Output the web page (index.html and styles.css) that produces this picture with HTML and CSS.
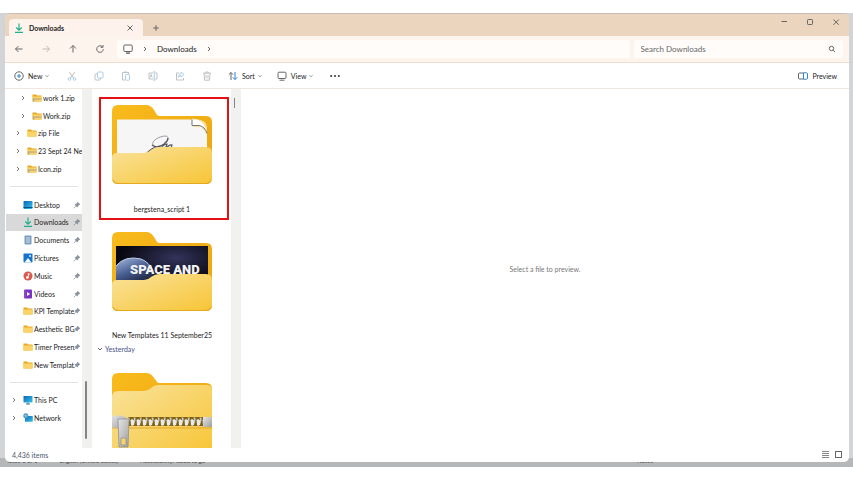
FILE: index.html
```html
<!DOCTYPE html>
<html lang="en">
<head>
  <meta charset="UTF-8">
  <meta name="viewport" content="width=device-width, initial-scale=1.0">
  <title>Downloads</title>
  <link rel="stylesheet" href="styles.css">
</head>
<body>

  <!-- Shared icons -->
  <svg class="sprite" aria-hidden="true">
    <defs>
      <linearGradient id="front" x1="0" y1="0" x2="1" y2="1">
        <stop offset="0" stop-color="#f9e29a"/>
        <stop offset="1" stop-color="#f7c537"/>
      </linearGradient>
      <linearGradient id="back" x1="0" y1="0" x2="1" y2="1">
        <stop offset="0" stop-color="#f9bb1c"/>
        <stop offset="1" stop-color="#e9a312"/>
      </linearGradient>
      <linearGradient id="screen" x1="0" y1="0" x2="1" y2="1">
        <stop offset="0" stop-color="#0e63b8"/>
        <stop offset="1" stop-color="#35c6e8"/>
      </linearGradient>
      <radialGradient id="space" cx="0.65" cy="0.3" r="0.6">
        <stop offset="0" stop-color="#33335c"/>
        <stop offset="1" stop-color="#07080f"/>
      </radialGradient>
      <linearGradient id="planet" x1="0" y1="0" x2="0.6" y2="1">
        <stop offset="0" stop-color="#a9bbe0"/>
        <stop offset="0.5" stop-color="#4a5f92"/>
        <stop offset="1" stop-color="#141b33"/>
      </linearGradient>
      <linearGradient id="metal" x1="0" y1="0" x2="1" y2="1">
        <stop offset="0" stop-color="#e6e6e6"/>
        <stop offset="1" stop-color="#9d9d9d"/>
      </linearGradient>
      <pattern id="teeth" width="6" height="9" patternUnits="userSpaceOnUse" y="44">
        <rect width="6" height="9" fill="#80620f"/>
        <path d="M0.500 3 2 2l3 2-1 4-2 1-1-1z" fill="#e9e9e9"/>
        <path d="M3.500 0.500h2v3l-1 2z" fill="#c9c9c9"/>
      </pattern>
    </defs>
    <symbol id="chevron" viewBox="0 0 8 8"><path d="M3 2 5 4 3 6"/></symbol>
    <symbol id="down" viewBox="0 0 8 8"><path d="M2 3l2 2 2-2"/></symbol>
    <symbol id="download" viewBox="0 0 10 10"><path d="M5 0.500V7M2.200 4.500 5 7.200l2.800-2.700M1 9.300h8" fill="none" stroke="#1fb089" stroke-width="1.200"/></symbol>
    <symbol id="folder" viewBox="0 0 10 10"><path d="M0.500 1.500h3.500l1 1h4.500v6h-9z" fill="#e9a820"/><path d="M0.500 3.500h9v5h-9z" fill="#fbd469"/></symbol>
    <symbol id="zip" viewBox="0 0 10 10"><path d="M0.500 1.500h3.500l1 1h4.500v6h-9z" fill="#e9a820"/><path d="M0.500 3.500h9v5h-9z" fill="#fbd469"/><path d="M1 6h8.500" stroke="#8c8c8c" stroke-width="1.200" stroke-dasharray="1.200 0.400"/><path d="M1.700 6v2.500" stroke="#a5a5a5" stroke-width="1.200"/></symbol>
    <symbol id="pin" viewBox="0 0 8 8"><path d="M4.500 0.700 7.300 3.500 5.800 4.200 4.300 6.500 1.500 3.700 3.800 2.200z" fill="#8a939d"/><path d="M2.700 5.300 0.800 7.200" stroke="#8a939d" stroke-width="0.800"/></symbol>
    <symbol id="monitor" viewBox="0 0 10 10"><rect x="0.800" y="1" width="8.400" height="6.500" rx="1"/><path d="M3 9.300h4M4 7.500v1.800M6 7.500v1.800"/></symbol>
    <symbol id="pc" viewBox="0 0 10 10"><rect x="0.500" y="1" width="9" height="6.500" rx="0.600" fill="url(#screen)"/><path d="M3 9h4M5 7.500V9" stroke="#42708f"/></symbol>
  </svg>

  <div class="desktop">
    <div class="window">

      <!-- Tabs and window buttons -->
      <div class="tab-bar">
        <div class="tab">
          <svg class="icon"><use href="#download"/></svg>
          <span class="tab-title">Downloads</span>
          <button class="icon-btn" aria-label="Close tab"><svg class="icon line" viewBox="0 0 10 10"><path d="M2.500 2.500l5 5M7.500 2.500l-5 5"/></svg></button>
        </div>
        <button class="icon-btn new-tab" aria-label="New tab"><svg class="icon line" viewBox="0 0 10 10"><path d="M5 2.200v5.600M2.200 5h5.600"/></svg></button>
        <div class="window-buttons">
          <button class="icon-btn" aria-label="Minimize"><svg class="icon line" viewBox="0 0 10 10"><path d="M2.500 4.500h5.500"/></svg></button>
          <button class="icon-btn" aria-label="Maximize"><svg class="icon line" viewBox="0 0 10 10"><rect x="2.500" y="2.500" width="5" height="5" rx="0.800"/></svg></button>
          <button class="icon-btn" aria-label="Close"><svg class="icon line" viewBox="0 0 10 10"><path d="M2.500 2.500l5.300 5.300M7.800 2.500L2.500 7.800"/></svg></button>
        </div>
      </div>

      <!-- Address bar -->
      <div class="nav-bar">
        <div class="nav-buttons">
          <button class="icon-btn" aria-label="Back"><svg class="icon line" viewBox="0 0 10 10"><path d="M8.500 5H1.500M4.500 2l-3 3 3 3"/></svg></button>
          <button class="icon-btn" aria-label="Forward" disabled><svg class="icon line" viewBox="0 0 10 10"><path d="M1.500 5h7M5.500 2l3 3-3 3"/></svg></button>
          <button class="icon-btn" aria-label="Up"><svg class="icon line" viewBox="0 0 10 10"><path d="M5 8.500V1.500M2 4.500l3-3 3 3"/></svg></button>
          <button class="icon-btn" aria-label="Refresh"><svg class="icon line" viewBox="0 0 10 10"><path d="M8.300 5.200A3.300 3.300 0 1 1 7.300 2.700M8 1v2.300H5.700"/></svg></button>
        </div>
        <nav class="breadcrumb" aria-label="Path">
          <svg class="icon line"><use href="#monitor"/></svg>
          <svg class="small-icon line"><use href="#chevron"/></svg>
          <a href="#">Downloads</a>
          <svg class="small-icon line"><use href="#chevron"/></svg>
        </nav>
        <label class="search">
          <input type="search" placeholder="Search Downloads" aria-label="Search Downloads">
          <svg class="small-icon line" viewBox="0 0 8 8"><circle cx="3.500" cy="3.500" r="2.200"/><path d="M5.200 5.200 7 7"/></svg>
        </label>
      </div>

      <!-- Command bar -->
      <div class="toolbar">
        <button class="tool-btn new-btn"><svg class="icon line" viewBox="0 0 10 10"><circle cx="5" cy="5" r="4.200"/><path class="blue" d="M5 3v4M3 5h4"/></svg>New<svg class="down line" viewBox="0 0 8 8"><use href="#down"/></svg></button>
        <div class="edit-buttons">
          <button class="icon-btn" aria-label="Cut" disabled><svg class="icon line" viewBox="0 0 10 10"><path d="M2.200 0.800 6.500 7M7.800 0.800 3.500 7"/><circle class="blue" cx="2.500" cy="8" r="1.300"/><circle class="blue" cx="7.500" cy="8" r="1.300"/></svg></button>
          <button class="icon-btn" aria-label="Copy" disabled><svg class="icon line" viewBox="0 0 10 10"><rect class="blue" x="3.500" y="1" width="5.500" height="6" rx="1"/><path d="M3.500 3H2a1 1 0 0 0-1 1v4a1 1 0 0 0 1 1h3.500a1 1 0 0 0 1-1V7"/></svg></button>
          <button class="icon-btn" aria-label="Paste" disabled><svg class="icon line" viewBox="0 0 10 10"><path d="M4 9H1.500V1.500h6V3M3 1h3"/><rect class="blue" x="4.500" y="3.500" width="4" height="5.700" rx="0.800"/></svg></button>
          <button class="icon-btn" aria-label="Rename" disabled><svg class="icon line" viewBox="0 0 10 10"><path d="M5 2H1v6h4M2.200 6.500l1-3 1 3M7.300 2H9v6H7.300"/><path class="blue" d="M6.300 0.800v8.400M5.300 0.800h2M5.300 9.200h2"/></svg></button>
          <button class="icon-btn" aria-label="Share" disabled><svg class="icon line" viewBox="0 0 10 10"><path d="M4 2H1.500v7h7V7"/><path class="blue" d="M6 1l3 2.500L6 6V4.500Q4 4.500 3.500 6.500 3.500 2.800 6 2.500z"/></svg></button>
          <button class="icon-btn" aria-label="Delete" disabled><svg class="icon line" viewBox="0 0 10 10"><path d="M1 2.200h8M3.700 2V1h2.600v1M2 2.200 2.500 9.200h5L8 2.200M4 4v3.500M6 4v3.500"/></svg></button>
        </div>
        <button class="tool-btn"><svg class="icon line" viewBox="0 0 10 10"><path d="M3 9V1.500M0.800 3.700 3 1.500l2.200 2.200"/><path class="blue" d="M7 1v7.500M4.800 6.300 7 8.500l2.200-2.200"/></svg>Sort<svg class="down line" viewBox="0 0 8 8"><use href="#down"/></svg></button>
        <button class="tool-btn view-btn"><svg class="icon line" viewBox="0 0 10 10"><rect x="1" y="1.200" width="8" height="6.300" rx="1"/><path d="M2.500 9.200h5"/></svg>View<svg class="down line" viewBox="0 0 8 8"><use href="#down"/></svg></button>
        <button class="icon-btn more-btn" aria-label="More"><svg class="icon" viewBox="0 0 10 10"><circle cx="1.200" cy="5" r="1"/><circle cx="5" cy="5" r="1"/><circle cx="8.800" cy="5" r="1"/></svg></button>
        <button class="tool-btn preview-btn"><svg class="icon line" viewBox="0 0 10 10"><path d="M5.500 2H1.500a1 1 0 0 0-1 1v4a1 1 0 0 0 1 1h4"/><path class="blue" d="M5.500 1.800h3a1 1 0 0 1 1 1v4.400a1 1 0 0 1-1 1h-3z"/></svg>Preview</button>
      </div>

      <div class="content">
        <!-- Folder tree -->
        <nav class="sidebar" aria-label="Folders">
          <a class="row nested" href="#"><svg class="small-icon line"><use href="#chevron"/></svg><svg class="icon"><use href="#zip"/></svg><span>work 1.zip</span></a>
          <a class="row nested" href="#"><svg class="small-icon line"><use href="#chevron"/></svg><svg class="icon"><use href="#zip"/></svg><span>Work.zip</span></a>
          <a class="row" href="#"><svg class="small-icon line"><use href="#chevron"/></svg><svg class="icon"><use href="#folder"/></svg><span>zip File</span></a>
          <a class="row" href="#"><svg class="small-icon line"><use href="#chevron"/></svg><svg class="icon"><use href="#zip"/></svg><span>23 Sept 24 New</span></a>
          <a class="row" href="#"><svg class="small-icon line"><use href="#chevron"/></svg><svg class="icon"><use href="#zip"/></svg><span>Icon.zip</span></a>
          <hr>
          <a class="row pinned" href="#"><svg class="icon" viewBox="0 0 10 10"><rect x="0.500" y="1" width="9" height="8" rx="0.800" fill="url(#screen)"/><path d="M0.500 7.500h9" stroke="#0b4f8a"/></svg><span>Desktop</span><svg class="small-icon"><use href="#pin"/></svg></a>
          <a class="row pinned selected" href="#"><svg class="icon"><use href="#download"/></svg><span>Downloads</span><svg class="small-icon"><use href="#pin"/></svg></a>
          <a class="row pinned" href="#"><svg class="icon" viewBox="0 0 10 10"><rect x="1.500" y="0.500" width="7" height="9" rx="0.800" fill="#7b9dbf"/><path d="M3 3h4M3 5h4M3 7h4" stroke="#e9f2fa" stroke-width="0.800"/></svg><span>Documents</span><svg class="small-icon"><use href="#pin"/></svg></a>
          <a class="row pinned" href="#"><svg class="icon" viewBox="0 0 10 10"><rect x="0.500" y="0.500" width="9" height="9" rx="0.800" fill="#1474cf"/><path d="M1.500 9.500 5 5l3.500 4.500z" fill="#fff"/><circle cx="7" cy="3" r="0.900" fill="#fff"/></svg><span>Pictures</span><svg class="small-icon"><use href="#pin"/></svg></a>
          <a class="row pinned" href="#"><svg class="icon" viewBox="0 0 10 10"><circle cx="5" cy="5" r="4.500" fill="#d9584f"/><circle cx="4.300" cy="6.500" r="1.300" fill="#fff"/><path d="M5.300 6.500V2.500L7 3.500" fill="none" stroke="#fff" stroke-width="0.900"/></svg><span>Music</span><svg class="small-icon"><use href="#pin"/></svg></a>
          <a class="row pinned" href="#"><svg class="icon" viewBox="0 0 10 10"><rect x="1" y="0.500" width="8" height="9" rx="0.800" fill="#7a32c4"/><path d="M4 3 7.200 5 4 7z" fill="#fff"/><path d="M2 1.500v7.500" stroke="#c9a5ee" stroke-width="0.800" stroke-dasharray="1 1"/></svg><span>Videos</span><svg class="small-icon"><use href="#pin"/></svg></a>
          <a class="row pinned" href="#"><svg class="icon"><use href="#folder"/></svg><span>KPI Template</span><svg class="small-icon"><use href="#pin"/></svg></a>
          <a class="row pinned" href="#"><svg class="icon"><use href="#folder"/></svg><span>Aesthetic BG</span><svg class="small-icon"><use href="#pin"/></svg></a>
          <a class="row pinned" href="#"><svg class="icon"><use href="#folder"/></svg><span>Timer Presen</span><svg class="small-icon"><use href="#pin"/></svg></a>
          <a class="row pinned" href="#"><svg class="icon"><use href="#folder"/></svg><span>New Templat</span><svg class="small-icon"><use href="#pin"/></svg></a>
          <hr>
          <a class="row root" href="#"><svg class="small-icon line"><use href="#chevron"/></svg><svg class="icon"><use href="#pc"/></svg><span>This PC</span></a>
          <a class="row root" href="#"><svg class="small-icon line"><use href="#chevron"/></svg><svg class="icon" viewBox="0 0 10 10"><rect x="2" y="3" width="7.800" height="5.800" rx="0.600" fill="url(#screen)"/><circle cx="2.800" cy="2.800" r="2.500" fill="#3b94bd"/><path d="M0.500 2.800h4.600M2.800 0.500v4.600" stroke="#c8ecf7" stroke-width="0.500"/></svg><span>Network</span></a>
        </nav>
        <div class="scroll-track side-track"><div class="thumb"></div></div>

        <!-- Files -->
        <main class="files">
          <button class="file marked">
            <svg class="big-folder" viewBox="0 0 100 79">
              <path d="M0 6Q0 0 6 0h28q5 0 8 5l3 5q1 1 3 1h46q6 0 6 6v56q0 6-6 6H6q-6 0-6-6z" fill="url(#back)"/>
              <path d="M5 14.500h75l15 11V55H5z" fill="#f6f6f7"/>
              <path d="M80 13.500V20q0 2 3 2h6l6 7V23q0-6-6-8z" fill="#f8dfa2"/>
              <path d="M80 14.500h5q8 3 10 14-3-7-9-8h-6z" fill="#fff"/>
              <path d="M80 14.500V20.500h7q6 1 8 8" fill="none" stroke="#777" stroke-width="1"/>
              <path d="M41 40c-2-4 6-9 13-9 4 1 1 5-2 7" fill="none" stroke="#888891" stroke-width="0.800"/>
              <path d="M35 48q5-5 9-6c7-1 12-5 12-9M47 46q4-7 8-7l-2 6q4-6 7-5l-2 6M40 40q4 3 9 1" fill="none" stroke="#53535e" stroke-width="1.200"/>
              <path d="M0 53q0-5 5-5h27q4 0 7-3 4-3 8-3h47q6 0 6 6v24q0 6-6 6H6q-6 0-6-6z" fill="url(#front)"/>
              <path d="M1 75q1 3.500 5 3.500h88q4 0 5-3.500" fill="none" stroke="#e5a91e"/>
            </svg>
            <span>bergstena_script 1</span>
          </button>
          <button class="file">
            <svg class="big-folder" viewBox="0 0 100 79">
              <path d="M0 6Q0 0 6 0h28q5 0 8 5l3 5q1 1 3 1h46q6 0 6 6v56q0 6-6 6H6q-6 0-6-6z" fill="url(#back)"/>
              <path d="M4 14h92v40H4z" fill="url(#space)"/>
              <path d="M4 54V34Q13 23 29 27q14 5 14 27z" fill="url(#planet)"/>
              <path d="M4 34Q13 23 29 27q8 3 12 12" fill="none" stroke="#bccdf0" stroke-width="1"/>
              <text class="cover-text" x="18" y="42">SPACE AND</text>
              <text class="cover-text" x="14" y="57">TECHNOLOGY</text>
              <path d="M0 53q0-5 5-5h27q4 0 7-3 4-3 8-3h47q6 0 6 6v24q0 6-6 6H6q-6 0-6-6z" fill="url(#front)"/>
              <path d="M1 75q1 3.500 5 3.500h88q4 0 5-3.500" fill="none" stroke="#e5a91e"/>
            </svg>
            <span>New Templates 11 September25</span>
          </button>
          <button class="group"><svg class="small-icon line"><use href="#down"/></svg>Yesterday</button>
          <button class="file zip-file" aria-label="Zip archive">
            <svg class="big-folder" viewBox="0 0 100 79">
              <path d="M0 6Q0 0 6 0h28q5 0 8 5l4 5h48q6 0 6 6v63H0z" fill="url(#back)"/>
              <path d="M0 24q0-6 6-6h26q4 0 7-3 3-3 7-3h48q6 0 6 5v62H0z" fill="url(#front)"/>
              <path d="M0 55h100" stroke="#e3a922"/>
              <rect x="16" y="44" width="76" height="9" fill="url(#teeth)"/>
              <path d="M91 44h9v10h-9z" fill="url(#metal)"/>
              <path d="M-1 44q8-4 16 1v9q-8 3-16 0z" fill="url(#metal)"/>
              <path d="M6 46h11l-1 28H7zM9 65v7h5v-7z" fill="url(#metal)" fill-rule="evenodd" stroke="#929292" stroke-width="0.800"/>
            </svg>
          </button>
        </main>
        <div class="scroll-track list-track"><div class="thumb"></div></div>

        <section class="preview"><p>Select a file to preview.</p></section>
      </div>

      <footer class="status-bar">
        <span>4,436 items</span>
        <div class="layout-buttons">
          <button class="icon-btn" aria-label="Details view"><svg class="icon line" viewBox="0 0 10 10"><path d="M2 1.500h7M2 3.500h7M2 5.500h7M2 7.500h7" stroke-width="0.800"/></svg></button>
          <button class="icon-btn" aria-label="Large icons view"><svg class="icon line" viewBox="0 0 10 10"><rect x="1.500" y="1.500" width="6" height="6"/></svg></button>
        </div>
      </footer>
    </div>

    <!-- Edge of the application behind the window -->
    <div class="behind">
      <span>Slide 1 of 1</span>
      <span>English (United States)</span>
      <span>Accessibility: Good to go</span>
      <span class="notes">Notes</span>
    </div>
  </div>

</body>
</html>
```
FILE: styles.css
```css
* {
  box-sizing: border-box;
}

body {
  margin: 0;
  height: 100vh;
  padding: 13px 0;
  display: flex;
  background-color: #fff;
  font-family: Lato, "Open Sans", sans-serif;
  font-size: 7px;
  line-height: 10px;
  color: #222;
}

button,
input {
  font: inherit;
  color: inherit;
  background: none;
  border: none;
  padding: 0;
}

a {
  color: inherit;
  text-decoration: none;
}

.sprite {
  position: absolute;
  width: 0;
  height: 0;
}

.icon {
  width: 10px;
  height: 10px;
  flex: none;
}

.small-icon {
  width: 8px;
  height: 8px;
  flex: none;
}

.line {
  fill: none;
  stroke: #666;
  stroke-width: 1;
}

.blue {
  stroke: #2f86cf;
}

.icon-btn {
  display: flex;
  justify-content: center;
  align-items: center;
  width: 26px;
  height: 16px;
}

.icon-btn:disabled {
  opacity: 0.4;
}

/* Window */
.desktop {
  flex: 1;
  display: flex;
  flex-direction: column;
  min-height: 0;
  background: linear-gradient(#d3d4d8 98%, #b5b7b8 98%);
}

.window {
  flex: 1;
  display: flex;
  flex-direction: column;
  min-height: 0;
  margin: 0 4px 0 5px;
  background-color: #fff;
  border-radius: 5px;
  border-top: 1px solid #c9bcb9;
  overflow: hidden;
}

.tab-bar {
  flex: none;
  display: flex;
  align-items: flex-end;
  height: 22px;
  background-color: #ecd5bf;
}

.tab {
  display: flex;
  align-items: center;
  width: 134px;
  height: 17px;
  margin-left: 4px;
  padding-left: 5px;
  background-color: #fdf3ec;
  border-radius: 4px 4px 0 0;
}

.tab-title {
  flex: 1;
  margin-left: 5px;
  font-weight: bold;
}

.new-tab {
  height: 17px;
}

.window-buttons {
  display: flex;
  margin: 0 0 6px auto;
}

.nav-bar {
  flex: none;
  display: flex;
  align-items: center;
  height: 27px;
  padding-right: 6px;
  background-color: #fdf4ed;
  border-bottom: 1px solid #eedccd;
  font-size: 8px;
}

.nav-buttons {
  display: flex;
  width: 112px;
  padding-left: 1px;
  gap: 1px;
}

.breadcrumb {
  flex: 1;
  display: flex;
  align-items: center;
  gap: 8px;
  height: 18px;
  padding-left: 6px;
  background-color: #fffcfa;
  border-radius: 3px;
}

.search {
  display: flex;
  align-items: center;
  width: 25%;
  height: 18px;
  margin-left: 4px;
  padding: 0 7px;
  background-color: #fffcfa;
  border-radius: 3px;
}

.search input {
  flex: 1;
  min-width: 0;
}

.search input::placeholder {
  color: #666;
}

/* Command bar */
.toolbar {
  flex: none;
  display: flex;
  align-items: center;
  height: 26px;
  padding: 1px 12px 0 9px;
  border-bottom: 1px solid #f0e6df;
}

.tool-btn {
  display: flex;
  align-items: center;
  gap: 4px;
}

.down {
  width: 6px;
  height: 6px;
  margin-left: -2px;
}

.new-btn {
  width: 45px;
}

.edit-buttons {
  display: flex;
  gap: 1px;
  margin-right: 8px;
}

.view-btn {
  margin-left: 14px;
}

.more-btn {
  margin-left: 8px;
}

.more-btn .icon {
  fill: #333;
}

.preview-btn {
  margin-left: auto;
}

/* Main area */
.content {
  flex: 1;
  display: grid;
  grid-template-columns: 77px 10px 139px 10px 1fr;
  grid-template-rows: minmax(0, 1fr);
  min-height: 0;
}

.sidebar {
  display: grid;
  grid-template-rows: repeat(19, minmax(0, 1fr));
  padding: 0 0 21px 1px;
  overflow: hidden;
}

.sidebar hr {
  align-self: center;
  width: 68px;
  margin: 0 4px;
  border: none;
  border-top: 1px solid #e2e2e2;
}

.row {
  display: flex;
  align-items: center;
  gap: 1px;
  min-width: 0;
  padding-left: 8px;
  white-space: nowrap;
}

.row .line {
  margin-right: 4px;
  stroke: #777;
}

.row span {
  flex: 1;
  min-width: 0;
  overflow: hidden;
}

.nested {
  padding-left: 13px;
}

.pinned {
  padding: 0 1px 0 17px;
}

.pinned span {
  margin-right: -3px;
}

.root {
  padding-left: 4px;
}

.selected {
  background-color: #d9d9d9;
}

.scroll-track {
  background-color: #f1f1f0;
}

.side-track {
  display: flex;
  align-items: flex-end;
  padding: 0 0 9px 3px;
}

.side-track .thumb {
  width: 2px;
  height: 58px;
  border-radius: 1px;
  background-color: #858585;
}

.list-track {
  padding: 9px 0 0 3px;
}

.list-track .thumb {
  width: 1px;
  height: 10px;
  background-color: #858585;
}

/* File list */
.files {
  display: flex;
  flex-direction: column;
  min-height: 0;
  padding: 8px 2px 0 7px;
  overflow: hidden;
}

.file {
  flex: none;
  display: flex;
  flex-direction: column;
  align-items: center;
  justify-content: space-between;
  height: 123px;
  padding: 8px 4px 7px 0;
  white-space: nowrap;
}

.marked {
  padding: 6px 4px 4px 0;
  border: 2px solid #e60f14;
}

.marked + .file {
  margin-top: 4px;
}

.big-folder {
  display: block;
  width: 100px;
  height: 79px;
}

.cover-text {
  font-family: "Liberation Sans Narrow", Roboto, sans-serif;
  font-size: 13px;
  font-weight: 900;
  fill: #f3f3f3;
}

.group {
  flex: none;
  display: flex;
  align-items: center;
  gap: 1px;
  margin: -3px 0 0 -3px;
  color: #46508a;
}

.zip-file {
  margin-top: 11px;
}

.preview {
  display: flex;
  justify-content: center;
  align-items: center;
  color: #777;
}

.preview p {
  margin: 0;
}

.status-bar {
  flex: none;
  display: flex;
  align-items: center;
  justify-content: space-between;
  height: 14px;
  padding: 0 3px 0 7px;
  color: #4d5768;
}

.layout-buttons {
  display: flex;
}

.layout-buttons .icon-btn {
  width: 14px;
  height: 12px;
}

.behind {
  flex: none;
  display: flex;
  align-items: flex-end;
  gap: 22px;
  height: 5px;
  padding: 0 200px 2px 8px;
  overflow: hidden;
  background-color: #b5b7b8;
  font-size: 6px;
  line-height: 8px;
  color: #444;
}

.notes {
  margin-left: auto;
}
```
